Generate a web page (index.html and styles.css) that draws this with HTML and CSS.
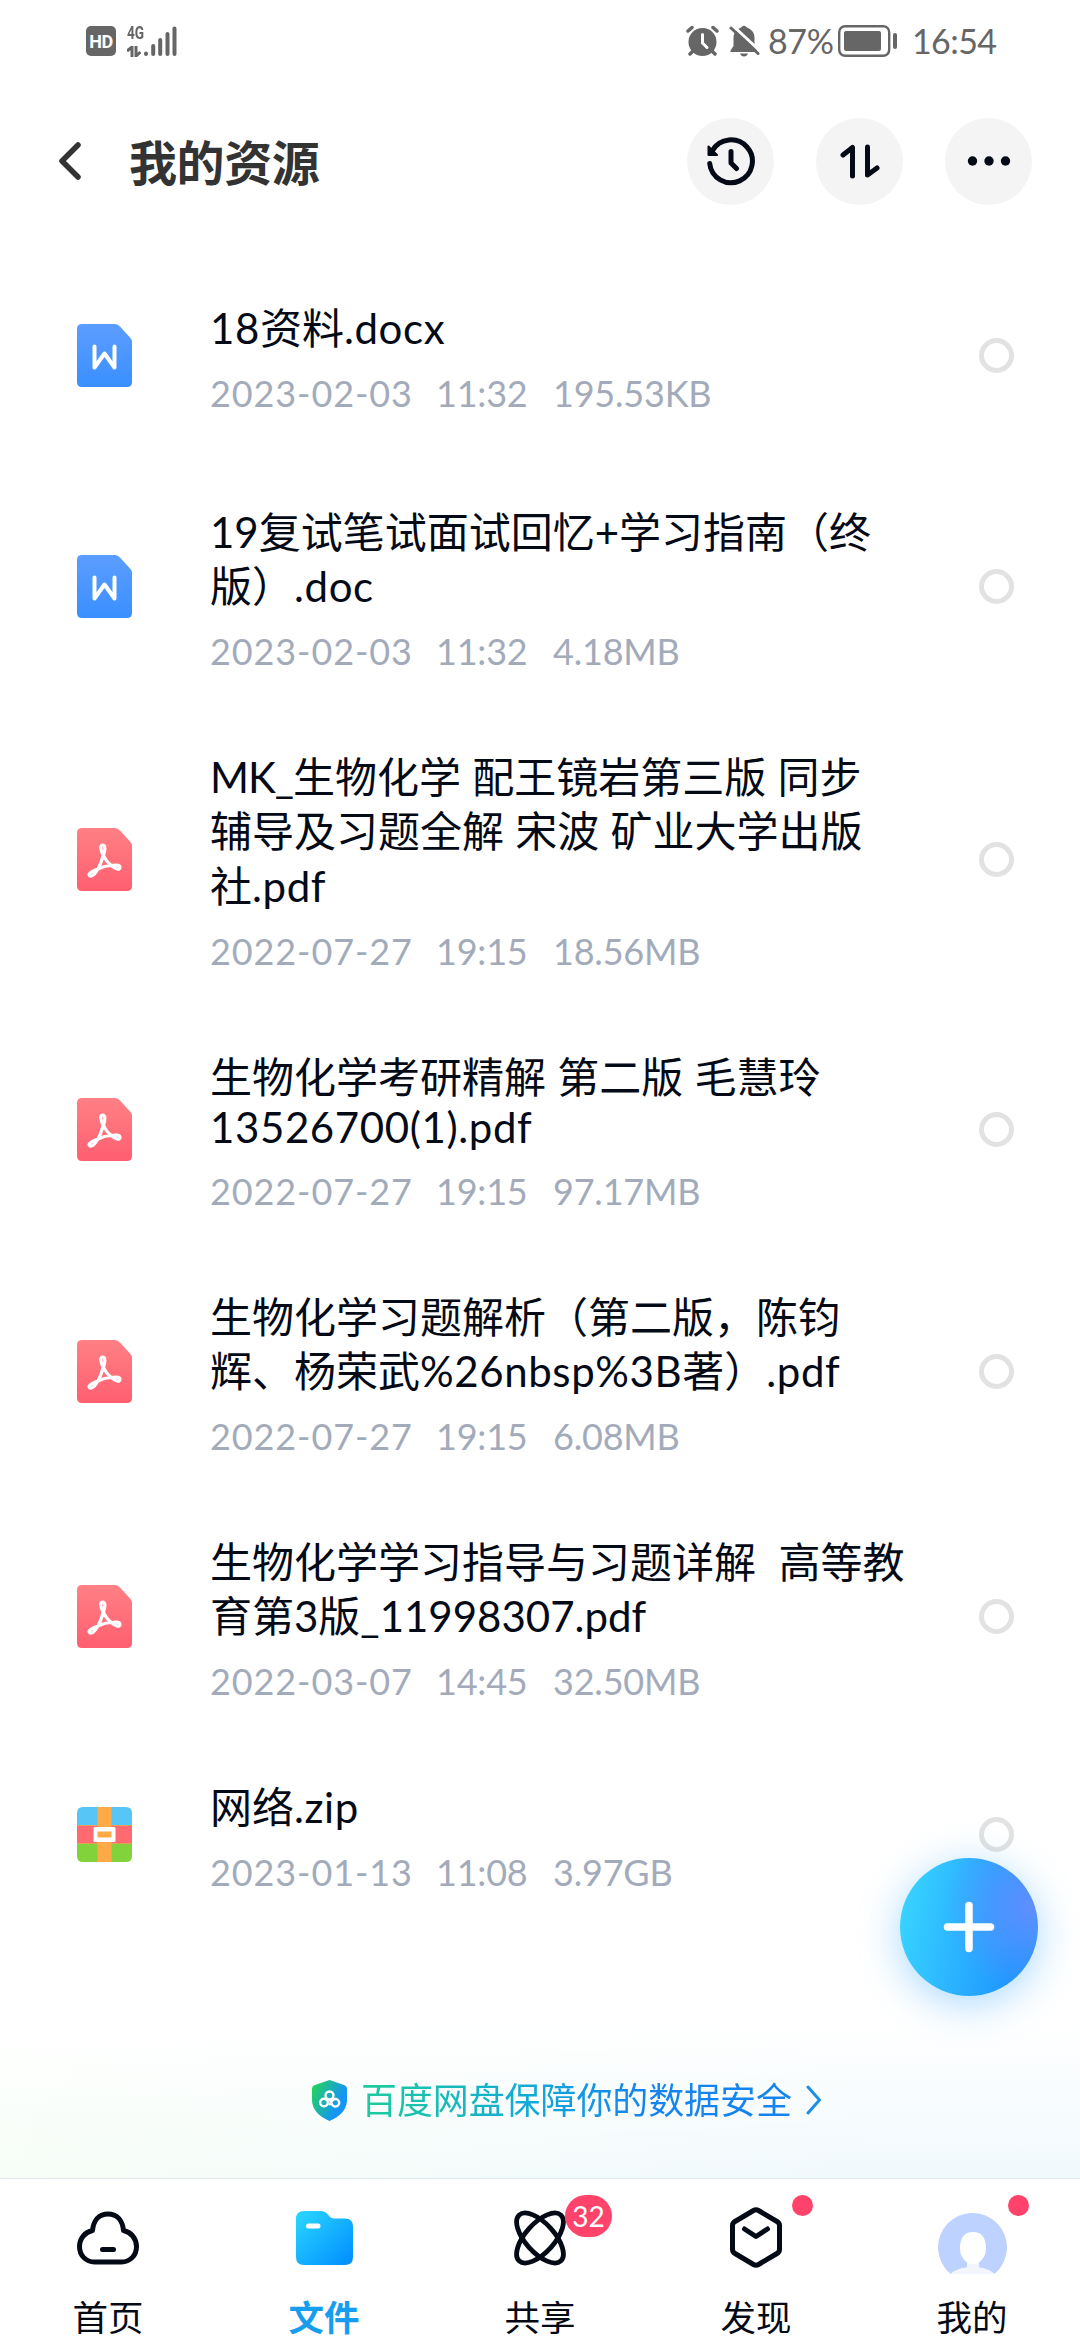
FILE: index.html
```html
<!DOCTYPE html>
<html lang="zh-CN">
<head>
  <meta charset="UTF-8">
  <meta name="viewport" content="width=device-width, initial-scale=1.0">
  <title>我的资源</title>
  <link rel="stylesheet" href="styles.css">
</head>
<body>

  <!-- Iconos reutilizados en la lista -->
  <svg class="defs" width="0" height="0">
    <defs>
      <linearGradient id="azul" x1="0" y1="0" x2="0" y2="1">
        <stop offset="0" stop-color="#5c9dff"/>
        <stop offset="1" stop-color="#3a8fff"/>
      </linearGradient>
      <linearGradient id="rojo" x1="0" y1="0" x2="0" y2="1">
        <stop offset="0" stop-color="#ff8085"/>
        <stop offset="1" stop-color="#ff5f70"/>
      </linearGradient>
      <linearGradient id="carpeta" x1="0" y1="0" x2="1" y2="1">
        <stop offset="0.1" stop-color="#26d0ff"/>
        <stop offset="1" stop-color="#008cff"/>
      </linearGradient>
      <linearGradient id="escudo" x1="0" y1="0.2" x2="1" y2="0.75">
        <stop offset="0" stop-color="#22d35c"/>
        <stop offset="0.75" stop-color="#1595f5"/>
      </linearGradient>
    </defs>
    <symbol id="doc" viewBox="0 0 55 63">
      <path fill="url(#azul)" d="M5 0H38Q41 0 43 2.500L53 13.500Q55 15.500 55 18V58Q55 63 50 63H5Q0 63 0 58V5Q0 0 5 0Z"/>
      <path fill="none" stroke="#fff" stroke-width="4" stroke-linecap="round" stroke-linejoin="round" d="M17.500 22.500V43.500L27.500 29.500L37.500 43.500V22.500"/>
    </symbol>
    <symbol id="pdf" viewBox="0 0 55 63">
      <path fill="url(#rojo)" d="M5 0H38Q41 0 43 2.500L53 13.500Q55 15.500 55 18V58Q55 63 50 63H5Q0 63 0 58V5Q0 0 5 0Z"/>
      <path fill="none" stroke="#fff" stroke-width="3.200" stroke-linejoin="round" d="M26 27C24 23 22.500 17 25.500 17C29 17 28 23 26.500 27C28 31 31 35 34.500 37.500C38.500 36.500 43 37 43 39.500C43 42.500 38 41 34.500 37.500C30.500 37.500 25 39 21 41C18.500 45.500 14.500 49.500 12.500 47.500C10.500 45.500 15.500 43 21 41C23 37 25.500 31 26 27Z"/>
    </symbol>
    <symbol id="zip" viewBox="0 0 55 55">
      <path fill="#58c5f7" d="M6 0H49Q55 0 55 6V18H0V6Q0 0 6 0Z"/>
      <path fill="#ff6b70" d="M0 18H55V37H0Z"/>
      <path fill="#82d23c" d="M0 37H55V49Q55 55 49 55H6Q0 55 0 49Z"/>
      <path stroke="#e9a05d" d="M0 18.500H55M0 36.500H55"/>
      <path fill="#ffaa46" d="M20.500 0H34.500V55H20.500Z"/>
      <rect x="16.500" y="20" width="22" height="15" rx="1.500" fill="#fff"/>
      <rect x="20.500" y="24.500" width="14" height="6" fill="#ffaa46"/>
    </symbol>
  </svg>

  <div class="status-bar">
    <div class="status-left">
      <span class="hd">HD</span>
      <div class="network">
        <span>4G</span>
        <svg width="14" height="11" viewBox="0 0 14 11"><path fill="none" stroke="#666" stroke-width="3" d="M5 11V1L0 5M9 0V10L13.500 6"/></svg>
      </div>
      <svg class="signal" width="34" height="32" viewBox="0 0 34 32">
        <path stroke="#666" stroke-width="4" stroke-linecap="round" d="M2 28.500V29M9.200 21V29M16.200 15V29M23.500 9V29M30.500 3.500V29"/>
      </svg>
    </div>
    <div class="status-right">
      <svg class="alarm" width="33" height="32" viewBox="0 0 33 32">
        <circle cx="16.500" cy="17" r="14" fill="#666"/>
        <path stroke="#666" stroke-width="3.500" stroke-linecap="round" d="M2 6L6 2.500M31 6L27 2.500M4 29L8 25M29 29L25 25"/>
        <path fill="none" stroke="#fff" stroke-width="3" stroke-linecap="round" stroke-linejoin="round" d="M16.500 9.500V18L21 22.500"/>
      </svg>
      <svg class="bell" width="31" height="32" viewBox="0 0 31 32">
        <path fill="#666" d="M12 2.500Q15 -1 18 2.500Q25.500 5.500 25.500 13V19L28 25.500V27H1.500V25.500L4.500 21V13Q4.500 5.500 12 2.500ZM11 28.500H19Q18 31.500 15 31.500Q12 31.500 11 28.500Z"/>
        <path stroke="#fff" stroke-width="3" d="M3 0L31 26"/>
        <path stroke="#666" stroke-width="3" stroke-linecap="round" d="M2 3L29 28.500"/>
      </svg>
      <span class="percent">87%</span>
      <svg class="battery" width="60" height="32" viewBox="0 0 60 32">
        <rect x="1.200" y="1.200" width="50" height="29.600" rx="6" fill="none" stroke="#666" stroke-width="2.400"/>
        <rect x="6" y="6" width="37" height="20" rx="2" fill="#666"/>
        <path stroke="#666" stroke-width="4" stroke-linecap="round" d="M57 10V22"/>
      </svg>
      <span class="clock">16:54</span>
    </div>
  </div>

  <div class="header">
    <svg class="back" width="26" height="42" viewBox="0 0 26 42">
      <path fill="none" stroke="#333" stroke-width="5.500" stroke-linecap="round" stroke-linejoin="round" d="M21 5L5 21L21 37"/>
    </svg>
    <h1>我的资源</h1>
    <div class="actions">
      <button>
        <svg width="50" height="50" viewBox="0 0 50 50">
          <path fill="none" stroke="#050a17" stroke-width="5" stroke-linecap="round" stroke-linejoin="round" d="M3.700 27.500A21.400 21.400 0 1 0 6.500 14.500M25 15.500V27L30.500 32.500"/>
          <path fill="#050a17" stroke="#050a17" stroke-width="2" stroke-linejoin="round" d="M2.500 10.500V19H11Z"/>
        </svg>
      </button>
      <button>
        <svg width="40" height="36" viewBox="0 0 40 36">
          <path fill="none" stroke="#050a17" stroke-width="5" stroke-linecap="round" stroke-linejoin="round" d="M3 12L12.500 4.500V33M27.500 4V32L37 25"/>
        </svg>
      </button>
      <button>
        <svg width="44" height="10" viewBox="0 0 44 10">
          <g fill="#050a17"><circle cx="5.500" cy="5" r="4.700"/><circle cx="22" cy="5" r="4.700"/><circle cx="38.500" cy="5" r="4.700"/></g>
        </svg>
      </button>
    </div>
  </div>

  <div class="file-list">
    <div class="file first">
      <svg class="file-icon" width="55" height="63"><use href="#doc"/></svg>
      <div class="file-info">
        <div class="file-name"><span class="en">18</span>资料<span class="en">.docx</span></div>
        <div class="file-meta"><span class="date">2023-02-03</span><span>11:32</span><span>195.53KB</span></div>
      </div>
      <span class="check"></span>
    </div>
    <div class="file">
      <svg class="file-icon" width="55" height="63"><use href="#doc"/></svg>
      <div class="file-info">
        <div class="file-name">19复试笔试面试回忆+学习指南（终<br>版）<span class="en">.doc</span></div>
        <div class="file-meta"><span class="date">2023-02-03</span><span>11:32</span><span>4.18MB</span></div>
      </div>
      <span class="check"></span>
    </div>
    <div class="file">
      <svg class="file-icon" width="55" height="63"><use href="#pdf"/></svg>
      <div class="file-info">
        <div class="file-name"><span class="mk">MK_</span>生物化学 配王镜岩第三版 同步<br>辅导及习题全解 宋波 矿业大学出版<br>社<span class="en">.pdf</span></div>
        <div class="file-meta"><span class="date">2022-07-27</span><span>19:15</span><span>18.56MB</span></div>
      </div>
      <span class="check"></span>
    </div>
    <div class="file">
      <svg class="file-icon" width="55" height="63"><use href="#pdf"/></svg>
      <div class="file-info">
        <div class="file-name compact">生物化学考研精解 第二版 毛慧玲<br><span class="en">13526700(1).pdf</span></div>
        <div class="file-meta"><span class="date">2022-07-27</span><span>19:15</span><span>97.17MB</span></div>
      </div>
      <span class="check"></span>
    </div>
    <div class="file">
      <svg class="file-icon" width="55" height="63"><use href="#pdf"/></svg>
      <div class="file-info">
        <div class="file-name">生物化学习题解析（第二版，陈钧<br>辉、杨荣武<span class="en">%26nbsp%3B</span>著）<span class="en">.pdf</span></div>
        <div class="file-meta"><span class="date">2022-07-27</span><span>19:15</span><span>6.08MB</span></div>
      </div>
      <span class="check"></span>
    </div>
    <div class="file">
      <svg class="file-icon" width="55" height="63"><use href="#pdf"/></svg>
      <div class="file-info">
        <div class="file-name">生物化学学习指导与习题详解  高等教<br>育第3版_11998307.pdf</div>
        <div class="file-meta"><span class="date">2022-03-07</span><span>14:45</span><span>32.50MB</span></div>
      </div>
      <span class="check"></span>
    </div>
    <div class="file">
      <svg class="file-icon" width="55" height="55"><use href="#zip"/></svg>
      <div class="file-info">
        <div class="file-name">网络<span class="en">.zip</span></div>
        <div class="file-meta"><span class="date">2023-01-13</span><span>11:08</span><span>3.97GB</span></div>
      </div>
      <span class="check"></span>
    </div>
  </div>

  <button class="add">
    <svg width="52" height="52" viewBox="0 0 52 52"><path stroke="#fff" stroke-width="7.500" stroke-linecap="round" d="M26 4.500V47.500M4.500 26H47.500"/></svg>
  </button>

  <div class="security">
    <svg width="35" height="41" viewBox="0 0 35 41">
      <path fill="url(#escudo)" d="M17.500 0L32 5Q35 6 35 9V21Q34 34 17.500 41Q1 34 0 21V9Q0 6 3 5Z"/>
      <g fill="none" stroke="#fff" stroke-width="2.400"><circle cx="17.500" cy="15.500" r="4"/><circle cx="12" cy="22.500" r="3.800"/><path d="M18 19.500L20 24.500A3.800 3.800 0 1 0 21 19.800L17 25"/></g>
    </svg>
    <span class="security-text">百度网盘保障你的数据安全</span>
    <svg width="16" height="30" viewBox="0 0 16 30"><path fill="none" stroke="#1b8fe8" stroke-width="3" stroke-linecap="round" stroke-linejoin="round" d="M2 2L13.500 15L2 28"/></svg>
  </div>

  <div class="tab-bar">
    <div class="tab">
      <div class="tab-icon">
        <svg width="64" height="56" viewBox="0 0 64 56">
          <path fill="none" stroke="#050a17" stroke-width="5" stroke-linejoin="round" d="M16.500 20.500C17.500 10 23.500 4 32 4S46.500 10 47.500 20.500C55 22 60.500 28.500 60.500 36.500C60.500 45.500 54 52 45.500 52H18.500C10 52 3.500 45.500 3.500 36.500C3.500 28.500 9 22 16.500 20.500Z"/>
          <path stroke="#050a17" stroke-width="5" stroke-linecap="round" d="M26.500 39.500H37.500"/>
        </svg>
      </div>
      <span>首页</span>
    </div>
    <div class="tab active">
      <div class="tab-icon">
        <svg width="57" height="54" viewBox="0 0 57 54">
          <path fill="url(#carpeta)" d="M8 0H25Q29 0 32 3.500L33.500 5.500Q35 7.500 38 7.500H49Q57 7.500 57 15.500V46Q57 54 49 54H8Q0 54 0 46V8Q0 0 8 0Z"/>
          <path stroke="#fff" stroke-width="5" stroke-linecap="round" d="M12.500 15H22"/>
        </svg>
      </div>
      <span>文件</span>
    </div>
    <div class="tab">
      <div class="tab-icon">
        <svg width="52" height="56" viewBox="0 0 52 56">
          <g fill="none" stroke="#050a17" stroke-width="4.800"><ellipse cx="26" cy="28" rx="31" ry="14.500" transform="rotate(48 26 28)"/><ellipse cx="26" cy="28" rx="31" ry="14.500" transform="rotate(-48 26 28)"/></g>
        </svg>
        <b class="badge">32</b>
      </div>
      <span>共享</span>
    </div>
    <div class="tab">
      <div class="tab-icon">
        <svg width="52" height="63" viewBox="0 0 52 63">
          <path fill="none" stroke="#050a17" stroke-width="5" stroke-linejoin="round" d="M23.500 4.500Q26 3 28.500 4.500L47 15.500Q49.500 17 49.500 19.500V43.500Q49.500 46 47 47.500L28.500 58.500Q26 60 23.500 58.500L5 47.500Q2.500 46 2.500 43.500V19.500Q2.500 17 5 15.500Z"/>
          <path fill="none" stroke="#050a17" stroke-width="5" stroke-linecap="round" stroke-linejoin="round" d="M14.500 23L26 30.500L37.500 23"/>
        </svg>
        <i class="dot"></i>
      </div>
      <span>发现</span>
    </div>
    <div class="tab">
      <div class="tab-icon">
        <svg class="avatar" width="69" height="61" viewBox="0 0 69 61">
          <path fill="#bed2ff" d="M12.500 61A34.500 34.500 0 1 1 56.500 61Q50 55.500 41 54.500V49.500Q48 44 48 35.500Q48 19 35 19Q22 19 22 35.500Q22 44 29 49.500V54.500Q19 55.500 12.500 61Z"/>
          <path fill="#f3f5ff" d="M29 49.500Q35 53.500 41 49.500V54.500Q50 55.500 56.500 61H12.500Q19 55.500 29 54.500Z"/>
        </svg>
        <i class="dot"></i>
      </div>
      <span>我的</span>
    </div>
  </div>

</body>
</html>
```
FILE: styles.css
```css
* {
  box-sizing: border-box;
}

body {
  font-family: Lato, 'Noto Sans CJK SC', sans-serif;
  background: #fff;
  color: #050a17;
  margin: 0;
  width: 1080px;
  height: 2340px;
  position: relative;
  overflow: hidden;
  display: flex;
  flex-direction: column;
}

svg {
  display: block;
  flex-shrink: 0;
}

.defs {
  position: absolute;
}

button {
  border: none;
  padding: 0;
  display: flex;
  align-items: center;
  justify-content: center;
}

/* Barra de estado */
.status-bar {
  height: 82px;
  padding: 0 86px;
  display: flex;
  align-items: center;
  justify-content: space-between;
  color: #666;
}

.status-left, .status-right {
  display: flex;
  align-items: center;
}

.hd {
  width: 30px;
  height: 30px;
  border-radius: 5px;
  background: #666;
  color: #fff;
  font: bold 18px/31px Roboto, sans-serif;
  letter-spacing: -0.5px;
  text-align: center;
}

.network {
  width: 17px;
  height: 32px;
  margin-left: 11px;
  display: flex;
  flex-direction: column;
  justify-content: space-between;
}

.network span {
  font: bold 19px/16px Roboto, sans-serif;
  transform: scaleX(0.72);
  transform-origin: left;
}

.bell {
  margin-left: 10px;
}

.percent, .clock {
  font-size: 34px;
  line-height: 40px;
}

.percent {
  width: 70px;
  margin-left: 8px;
  letter-spacing: -0.4px;
}

.clock {
  width: 82px;
  margin-left: 14px;
  letter-spacing: -0.6px;
}

/* Cabecera */
.header {
  height: 160px;
  padding: 0 48px 2px 57px;
  display: flex;
  align-items: center;
}

.header h1 {
  margin: 4px 0 0 46px;
  font-size: 48px;
  line-height: 60px;
  letter-spacing: -0.4px;
  color: #333;
}

.actions {
  margin-left: auto;
  display: flex;
  gap: 42px;
}

.actions button {
  width: 87px;
  height: 87px;
  border-radius: 50%;
  background: #f4f4f4;
}

/* Lista de archivos */
.file-list {
  margin-top: 19px;
}

.file {
  padding: 40px 66px 37px 77px;
  display: flex;
  align-items: center;
}

.first {
  margin-bottom: 13px;
}

.file-icon, .check {
  position: relative;
  top: -2px;
}

.file-info {
  flex: 1;
  margin-left: 78px;
}

.file-name {
  font-size: 42px;
  line-height: 54.6px;
  white-space: pre;
  word-spacing: 0.5px;
}

.en {
  letter-spacing: 0.6px;
}

.mk {
  letter-spacing: -1px;
}

.compact {
  line-height: 50px;
  padding: 2px 0;
}

.file-meta {
  margin-top: 15px;
  display: grid;
  grid-template-columns: 226px 117px auto;
  font-size: 36px;
  line-height: 44px;
  letter-spacing: -0.2px;
  color: #a3abbb;
}

.date {
  letter-spacing: 0.9px;
}

.check {
  width: 35px;
  height: 35px;
  border: 5px solid #e2e2e2;
  border-radius: 50%;
}

.add {
  position: absolute;
  left: 900px;
  top: 1858px;
  width: 138px;
  height: 138px;
  border-radius: 50%;
  background: radial-gradient(circle at 95% 35%, #5f8fff, rgba(95, 143, 255, 0) 55%), linear-gradient(100deg, #3ad8ff, #1f97ff 80%);
  box-shadow: 0 8px 40px rgba(50, 165, 255, 0.42);
}

/* Aviso de seguridad */
.security {
  height: 158px;
  margin-top: auto;
  padding: 2px 0 0 312px;
  display: flex;
  align-items: center;
  background: linear-gradient(#fff, rgba(255, 255, 255, 0)), linear-gradient(90deg, #f7fef7, #f1f9fd 80%);
}

.security-text {
  margin: 0 14px;
  font-size: 36px;
  letter-spacing: -0.1px;
  line-height: 50px;
  background: linear-gradient(90deg, #1ecb9b, #12a9d8 40%, #1684ee 65%);
  -webkit-background-clip: text;
  background-clip: text;
  color: transparent;
}

/* Barra inferior */
.tab-bar {
  height: 162px;
  border-top: 1px solid #dfe7ec;
  display: flex;
}

.tab {
  flex: 1;
  display: flex;
  flex-direction: column;
  align-items: center;
  font-size: 35.5px;
  line-height: 50px;
}

.tab-icon {
  position: relative;
  flex-shrink: 0;
  width: 72px;
  height: 114px;
  padding-top: 3px;
  display: flex;
  align-items: center;
  justify-content: center;
}

.active {
  color: #169df0;
  font-weight: bold;
}

.avatar {
  margin-top: 12px;
}

.badge {
  position: absolute;
  left: 61px;
  top: 16px;
  width: 47px;
  height: 42px;
  border-radius: 21px;
  background: #ff436a;
  color: #fff;
  font-size: 28px;
  font-weight: normal;
  line-height: 43px;
  text-align: center;
}

.dot {
  position: absolute;
  left: 72px;
  top: 16px;
  width: 21px;
  height: 21px;
  border-radius: 50%;
  background: #ff436a;
}
```
